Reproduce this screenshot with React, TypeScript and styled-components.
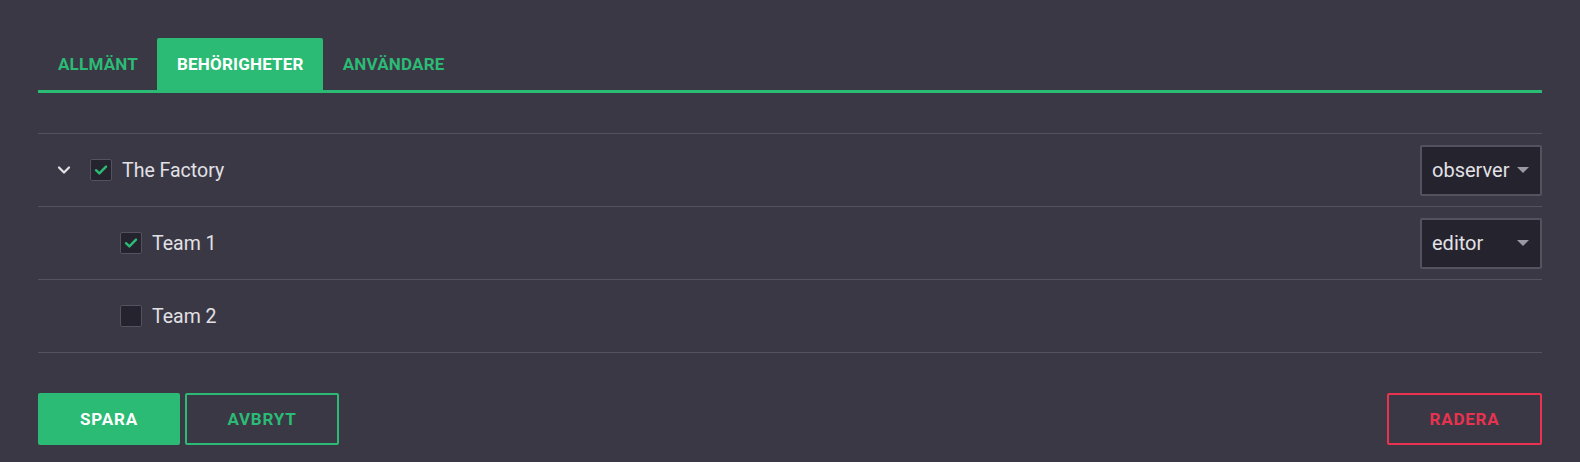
import React, { useState } from "react";
import styled, { createGlobalStyle } from "styled-components";

const GREEN = "#2bbb75";
const RED = "#e8324f";
const BG = "#3a3845";
const LINE = "#55525f";
const DARK = "#25232e";
const TEXT = "#e2e1e6";

const Global = createGlobalStyle`
  html, body { margin: 0; padding: 0; background: ${BG}; }
  body { font-family: Roboto, "Liberation Sans", Arial, sans-serif; }
  * { box-sizing: border-box; }
`;

const Page = styled.div`
  padding: 38px 38px 18px;
  display: flex;
  flex-direction: column;
`;

const TabBar = styled.div`
  display: flex;
  border-bottom: 3px solid ${GREEN};
`;

const Tab = styled.button<{ $active?: boolean }>`
  height: 52px;
  padding: 0 19px 0 20px;
  border: none;
  border-radius: 2px 2px 0 0;
  background: ${(p) => (p.$active ? GREEN : "transparent")};
  color: ${(p) => (p.$active ? "#ffffff" : GREEN)};
  font-family: Roboto, "Liberation Sans", Arial, sans-serif;
  font-weight: 700;
  font-size: 17px;
  letter-spacing: 0.2px;
  cursor: pointer;
`;

const Tree = styled.div`
  margin-top: 40px;
  border-top: 1px solid ${LINE};
  display: flex;
  flex-direction: column;
`;

const Row = styled.div<{ $indent: number }>`
  height: 73px;
  border-bottom: 1px solid ${LINE};
  display: flex;
  align-items: center;
  padding-left: ${(p) => p.$indent}px;
`;

const Chevron = styled.span`
  width: 20px;
  height: 20px;
  margin-right: 16px;
  display: flex;
  align-items: center;
  justify-content: center;
  color: #e4e3e8;
`;

const Check = styled.span<{ $checked?: boolean }>`
  width: 22px;
  height: 22px;
  border: 1px solid ${LINE};
  border-radius: 2px;
  background: ${DARK};
  display: flex;
  align-items: center;
  justify-content: center;
  flex-shrink: 0;
`;

const Label = styled.span`
  margin-left: 10px;
  font-size: 19.5px;
  color: ${TEXT};
  flex: 1;
`;

const Select = styled.div`
  width: 122px;
  height: 51px;
  background: ${DARK};
  border: 2px solid ${LINE};
  border-radius: 2px;
  display: flex;
  align-items: center;
  justify-content: space-between;
  padding: 0 11px 0 10px;
  font-size: 20px;
  color: ${TEXT};
`;

const Caret = styled.span`
  width: 0;
  height: 0;
  border-left: 6px solid transparent;
  border-right: 6px solid transparent;
  border-top: 6px solid #9b99a3;
`;

const Actions = styled.div`
  margin-top: 40px;
  display: flex;
  align-items: center;
  gap: 5px;
`;

const Spacer = styled.div`
  flex: 1;
`;

const Button = styled.button<{ $variant: "primary" | "outline" | "danger"; $w: number }>`
  width: ${(p) => p.$w}px;
  height: 52px;
  border-radius: 2px;
  font-family: Roboto, "Liberation Sans", Arial, sans-serif;
  font-weight: 700;
  font-size: 17px;
  letter-spacing: 0.8px;
  cursor: pointer;
  background: ${(p) => (p.$variant === "primary" ? GREEN : "transparent")};
  color: ${(p) =>
    p.$variant === "primary" ? "#ffffff" : p.$variant === "danger" ? RED : GREEN};
  border: 2px solid
    ${(p) => (p.$variant === "danger" ? RED : GREEN)};
`;

const CheckMark = () => (
  <svg width="14" height="12" viewBox="0 0 14 12">
    <path d="M2 6.2 L5.4 9.4 L12 2.6" fill="none" stroke={GREEN} strokeWidth="2.4" strokeLinecap="round" strokeLinejoin="round" />
  </svg>
);

const ChevronDown = () => (
  <svg width="14" height="10" viewBox="0 0 14 10">
    <path d="M2 2.5 L7 7.5 L12 2.5" fill="none" stroke="currentColor" strokeWidth="2.2" strokeLinecap="round" strokeLinejoin="round" />
  </svg>
);

export default function App() {
  const [tab, setTab] = useState(1);
  const tabs = ["ALLMÄNT", "BEHÖRIGHETER", "ANVÄNDARE"];
  return (
    <>
      <Global />
      <Page>
        <TabBar>
          {tabs.map((t, i) => (
            <Tab key={t} $active={tab === i} onClick={() => setTab(i)}>
              {t}
            </Tab>
          ))}
        </TabBar>
        <Tree>
          <Row $indent={16}>
            <Chevron>
              <ChevronDown />
            </Chevron>
            <Check $checked>
              <CheckMark />
            </Check>
            <Label>The Factory</Label>
            <Select>
              <span>observer</span>
              <Caret />
            </Select>
          </Row>
          <Row $indent={82}>
            <Check $checked>
              <CheckMark />
            </Check>
            <Label>Team 1</Label>
            <Select>
              <span>editor</span>
              <Caret />
            </Select>
          </Row>
          <Row $indent={82}>
            <Check />
            <Label>Team 2</Label>
          </Row>
        </Tree>
        <Actions>
          <Button $variant="primary" $w={142}>SPARA</Button>
          <Button $variant="outline" $w={154}>AVBRYT</Button>
          <Spacer />
          <Button $variant="danger" $w={155}>RADERA</Button>
        </Actions>
      </Page>
    </>
  );
}
